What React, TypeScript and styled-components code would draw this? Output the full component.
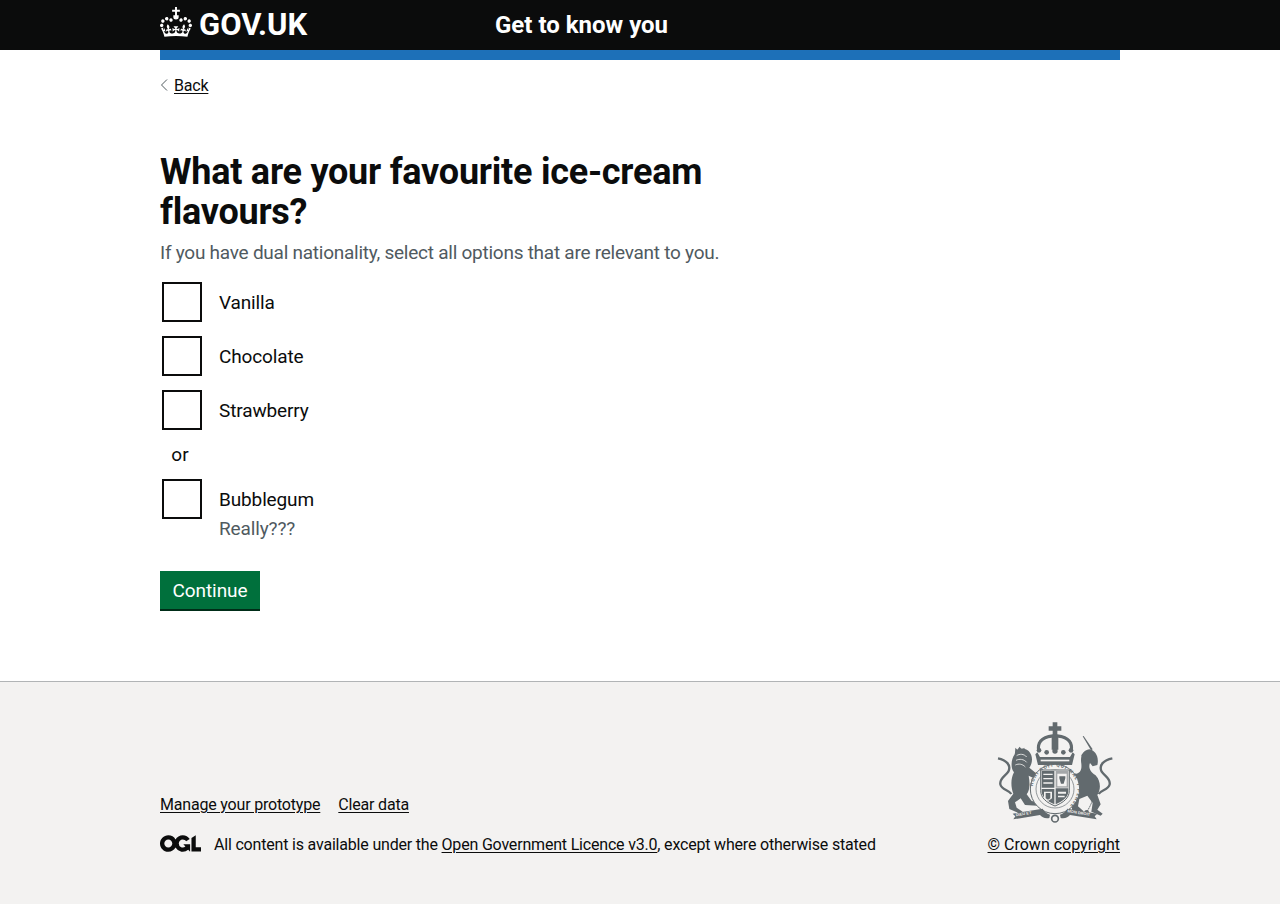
import React from "react";
import styled, { createGlobalStyle } from "styled-components";

const Global = createGlobalStyle`
  html, body { margin: 0; padding: 0; background: #fff; }
  body { font-family: Roboto, "Noto Sans", Arial, sans-serif; color: #0b0c0c; }
`;
const Page = styled.div`display:flex;flex-direction:column;min-height:904px;`;
const Header = styled.header`height:50px;background:#0b0c0c;flex:none;`;
const HeaderInner = styled.div`width:960px;margin:0 auto;height:50px;display:flex;align-items:center;`;
const Brand = styled.a`width:335px;display:flex;align-items:center;gap:7px;color:#fff;font-weight:700;font-size:31px;line-height:50px;`;
const CrownMark = styled.svg`flex:none;margin-bottom:6px;`;
const Service = styled.div`color:#fff;font-weight:700;font-size:24px;line-height:50px;`;
const Bar = styled.div`width:960px;height:10px;margin:0 auto;background:#1d70b8;flex:none;`;
const Main = styled.main`width:960px;margin:0 auto;flex:1;display:flex;flex-direction:column;`;
const Back = styled.div`margin-top:15px;height:21px;display:flex;align-items:center;gap:6px;font-size:16px;line-height:21px;letter-spacing:-.2px;`;
const BackChevron = styled.svg`flex:none;margin-bottom:2px;`;
const Link = styled.a`color:#0b0c0c;text-decoration:underline;text-underline-offset:2px;text-decoration-thickness:1px;`;
const Title = styled.h1`margin:56px 0 0;width:640px;font-size:36px;line-height:40px;font-weight:700;letter-spacing:-.24px;`;
const Hint = styled.div`margin-top:8px;font-size:19px;line-height:25px;color:#505a5f;letter-spacing:-.25px;`;
const Options = styled.div`margin-top:17px;display:flex;flex-direction:column;`;
const Option = styled.label`display:flex;padding-left:2px;min-height:54px;font-size:19px;line-height:25px;letter-spacing:-.13px;`;
const Box = styled.span`box-sizing:border-box;width:40px;height:40px;border:2px solid #0b0c0c;flex:none;background:#fff;`;
const Copy = styled.span`margin-left:17px;padding-top:8px;display:flex;flex-direction:column;`;
const OptionHint = styled.span`margin-top:4px;color:#505a5f;`;
const Divider = styled.div`width:40px;font-size:19px;line-height:21px;text-align:center;height:35px;`;
const Button = styled.button`align-self:flex-start;margin-top:30px;width:100px;height:38px;border:0;border-radius:0;padding:0;background:#00703c;color:#fff;font:400 19px/25px Roboto,sans-serif;letter-spacing:-.07px;box-shadow:0 2px 0 #002d18;`;
const Footer = styled.footer`flex:none;height:223px;box-sizing:border-box;border-top:1px solid #b1b4b6;background:#f3f2f1;`;
const FooterInner = styled.div`width:960px;margin:0 auto;padding-top:40px;display:flex;justify-content:space-between;align-items:flex-end;`;
const FooterLeft = styled.div`display:flex;flex-direction:column;gap:20px;font-size:16px;line-height:20px;letter-spacing:-.19px;`;
const FooterLinks = styled.div`display:flex;gap:18px;`;
const Licence = styled.div`display:flex;align-items:flex-start;gap:13px;`;
const FooterRight = styled.div`display:flex;flex-direction:column;align-items:flex-end;font-size:16px;line-height:20px;gap:11px;`;
const CrestMark = styled.svg`display:block;margin-right:6px;`;

const Crown = () => (
  <CrownMark width="32" height="30" viewBox="0 0 132 120" preserveAspectRatio="none" aria-hidden>
    <g transform="translate(0 23)">
      <path fill="#fff" fillRule="evenodd" d="M25 30.2c3.5 1.5 7.7-.2 9.1-3.7 1.5-3.6-.2-7.8-3.9-9.2-3.6-1.4-7.6.3-9.1 3.9-1.4 3.5.3 7.5 3.9 9zM9 39.5c3.6 1.5 7.8-.2 9.2-3.7 1.5-3.6-.2-7.8-3.9-9.1-3.6-1.5-7.6.2-9.1 3.8-1.4 3.5.3 7.5 3.8 9zM4.4 57.2c3.5 1.5 7.7-.2 9.1-3.8 1.5-3.6-.2-7.7-3.9-9.1-3.5-1.5-7.6.3-9.1 3.8-1.4 3.5.3 7.6 3.9 9.1zm38.3-21.4c3.5 1.5 7.7-.2 9.1-3.8 1.5-3.6-.2-7.7-3.9-9.1-3.6-1.5-7.6.3-9.1 3.8-1.3 3.6.4 7.7 3.9 9.1zm64.4-5.6c-3.6 1.5-7.8-.2-9.1-3.7-1.5-3.6.2-7.8 3.8-9.2 3.6-1.4 7.7.3 9.2 3.9 1.3 3.5-.4 7.5-3.9 9zm15.9 9.3c-3.6 1.5-7.7-.2-9.1-3.7-1.5-3.6.2-7.8 3.7-9.1 3.6-1.5 7.7.2 9.2 3.8 1.5 3.5-.3 7.5-3.8 9zm4.7 17.7c-3.6 1.5-7.8-.2-9.2-3.8-1.5-3.6.2-7.7 3.9-9.1 3.6-1.5 7.7.3 9.2 3.8 1.3 3.5-.4 7.6-3.9 9.1zM89.3 35.8c-3.6 1.5-7.8-.2-9.2-3.8-1.4-3.6.2-7.7 3.9-9.1 3.6-1.5 7.7.3 9.2 3.8 1.4 3.6-.3 7.7-3.9 9.1zM66 92.8c16.9 0 32.8 1.1 47.1 3.2 4-16.9 8.9-26.7 14-33.5l-9.6-3.4c1 4.9 1.1 7.2 0 10.2-1.5-1.4-3-4.3-4.2-8.7L108.6 76c2.8-2 5-3.2 7.5-3.3-4.4 9.4-10 11.9-13.6 11.2-4.3-.8-6.3-4.6-5.6-7.9 1-4.7 5.7-5.9 8-.5 4.3-8.7-3-11.4-7.6-8.8 7.1-7.2 7.9-13.5 2.1-21.1-8 6.1-8.1 12.3-4.5 20.8-4.7-5.4-12.1-2.5-9.5 6.2 3.4-5.2 7.9-2 7.2 3.1-.6 4.3-6.4 7.8-13.5 7.2-10.3-.9-10.9-8-11.2-13.8 2.5-.5 7.1 1.8 11 7.3L80.2 60c-4.1 4.4-8 5.3-12.3 5.4 1.4-4.4 8-11.6 8-11.6H55.5s6.4 7.2 7.9 11.6c-4.2-.1-8-1-12.3-5.4l1.4 16.4c3.9-5.5 8.5-7.7 10.9-7.3-.3 5.8-.9 12.8-11.1 13.8-7.2.6-12.9-2.9-13.5-7.2-.7-5 3.8-8.3 7.1-3.1 2.7-8.7-4.6-11.6-9.4-6.2 3.7-8.5 3.6-14.7-4.6-20.8-5.8 7.6-5 13.9 2.2 21.1-4.7-2.6-11.9.1-7.7 8.8 2.3-5.5 7.1-4.2 8.1.5.7 3.3-1.3 7.1-5.7 7.9-3.5.7-9-1.8-13.5-11.2 2.5.1 4.7 1.3 7.5 3.3l-4.7-15.4c-1.2 4.4-2.7 7.2-4.3 8.7-1.1-3-.9-5.3 0-10.2l-9.5 3.4c5 6.9 9.9 16.7 14 33.5 14.8-2.1 30.8-3.2 47.7-3.2z" />
    </g>
    <path fill="#fff" d="M62 0h8v11h12v8H70v14h7v8c0 6-5 9-11 9s-11-3-11-9v-8h7V19H50v-8h12z" />
  </CrownMark>
);

const Ogl = () => (
  <svg width="41" height="17" viewBox="0 0 483.2 195.7" aria-hidden>
    <path fill="#0b0c0c" d="M421.5 142.8V.1l-50.7 32.3v161.1h112.4v-50.7zm-122.3-9.6A47.12 47.12 0 0 1 221 97.8c0-26 21.1-47.1 47.1-47.1 16.7 0 31.4 8.7 39.7 21.8l42.7-27.2A97.63 97.63 0 0 0 268.1 0c-36.5 0-68.3 20.1-85.1 49.7A98 98 0 0 0 97.8 0C43.9 0 0 43.9 0 97.8s43.9 97.8 97.8 97.8c36.5 0 68.3-20.1 85.1-49.7a97.76 97.76 0 0 0 149.6 25.4l19.4 22.2h3v-87.8h-80l24.3 27.5zM97.8 145c-26 0-47.1-21.1-47.1-47.1s21.1-47.1 47.1-47.1 47.2 21 47.2 47S123.8 145 97.8 145" />
  </svg>
);

const G = "#626a6e";
const B = "#f3f2f1";
const Crest = () => (
  <CrestMark width="117" height="102" viewBox="51 21 351 306" aria-hidden>
    {/* crown */}
    <g fill={G}>
      <path d="M218 22h14v12h12v13h-12v14h-14V47h-12V34h12z" />
      <path d="M172 108c-6-24 8-46 46-50h14c38 4 52 26 46 50l-9-3c4-18-6-34-34-37v36h-20V68c-28 3-38 19-34 37z" />
      <path d="M172 112l8 14h90l8-14 6 6-8 32H174l-8-32z" />
      <circle cx="177" cy="106" r="7" /><circle cx="200" cy="112" r="7" /><circle cx="225" cy="108" r="8" /><circle cx="250" cy="112" r="7" /><circle cx="273" cy="106" r="7" />
    </g>
    <path fill={B} d="M182 134h86v5h-86z" />
    {/* lion */}
    <g fill={G}>
      <path d="M106 98l6 6 7-9 7 9 7-6 2 16h-30z" />
      <path d="M104 118C106 100 132 94 146 108C160 122 158 145 148 158L172 178L166 192L146 182C150 205 150 225 140 238L155 258L172 262L172 272L135 270L122 250L105 262L110 278L128 290L120 296L88 282L84 258L100 236C92 215 92 190 102 172C92 160 92 135 104 118Z" />
    </g>
    <g fill="none" stroke={G} strokeWidth="7">
      <path d="M54 130C78 135 95 150 85 170C75 185 58 190 61 208C64 225 88 225 94 237" />
      <path d="M397 130C372 135 355 150 365 170C375 185 392 190 389 208C386 225 362 225 356 237" />
    </g>
    <g fill="none" stroke={B} strokeWidth="2.500">
      <path d="M110 122c8-6 22-6 30 4M108 136c10-5 24-4 32 6M106 150c10-5 22-3 30 6" />
    </g>
    {/* unicorn */}
    <g fill={G}>
      <path d="M308 64l3-1 27 40-5 3z" />
      <path d="M328 103C346 106 358 126 352 150L338 154L330 144C324 158 332 172 346 180C362 196 364 222 352 240L362 268L352 284L368 296L362 302L334 290L338 264L322 242L298 252L294 274L310 288L304 296L276 284L276 256L290 236C284 222 286 212 292 206L276 196L280 176C300 178 306 166 304 146C300 124 308 106 328 103Z" />
      <path d="M304 120l10-8 4 14-8 10z" />
    </g>
    <path fill="none" stroke={G} strokeWidth="3" strokeDasharray="5 2" d="M352 190C350 225 338 262 322 288" />
    <circle cx="320" cy="292" r="7" fill={G} />
    {/* shield + garter */}
    <circle cx="225" cy="222" r="74" fill={B} />
    <circle cx="225" cy="222" r="74" fill="none" stroke={G} strokeWidth="3" />
    <circle cx="225" cy="222" r="57" fill="none" stroke={G} strokeWidth="2" />
    <defs>
      <path id="garter" d="M158 222a67 67 0 1 1 134 0a67 67 0 1 1-134 0" />
    </defs>
    <text fill={G} fontFamily="Roboto, sans-serif" fontSize="14" fontWeight="700" letterSpacing="3">
      <textPath href="#garter" startOffset="8">HONI SOIT QUI MAL Y PENSE</textPath>
    </text>
    <path fill={B} stroke={G} strokeWidth="3" d="M182 165h86v62c0 22-18 36-43 46-25-10-43-24-43-46z" />
    <g fill={G}>
      <path d="M185 168h38v50h-38zM227 220h38v8c0 18-16 30-38 40zM223 222v46c-22-10-38-22-38-40v-6z" />
      <path d="M227 168h38v50h-38z" opacity=".55" />
    </g>
    <g fill={B}>
      <path d="M190 176h28v4h-28zM190 189h28v4h-28zM190 202h28v4h-28zM232 176h28v38h-28z" />
      <path d="M192 230h24v20l-12 8-12-8z" />
      <path d="M234 230h24v6h-24zM234 242h20v5h-20z" />
    </g>
    <g fill={G}>
      <path d="M238 184h18v6l-5 16h-8l-5-16zM197 234h14v16l-7 4-7-4z" />
    </g>
    {/* motto */}
    <path fill={G} d="M98 296l90-15c4 8 12 14 22 18l-2 10c-14 2-22-2-28-9l-80 13 6-9zM352 296l-90-15c-4 8-12 14-22 18l2 10c14 2 22-2 28-9l80 13-6-9z" />
    <circle cx="225" cy="311" r="10" fill="none" stroke={G} strokeWidth="5" />
    <g fill={B} fontFamily="Liberation Sans, sans-serif" fontSize="12" fontWeight="700">
      <text x="108" y="304" transform="rotate(-9 108 304)">DIEU ET</text>
      <text x="262" y="292" transform="rotate(9 262 292)">MON DROIT</text>
    </g>
  </CrestMark>
);

const Chevron = () => (
  <BackChevron width="8" height="12" viewBox="0 0 8 12" aria-hidden>
    <path d="M7 .5L1.500 6 7 11.500" fill="none" stroke="#505a5f" strokeWidth="1" />
  </BackChevron>
);

const Choice = ({ label, hint }: { label: string; hint?: string }) => (
  <Option>
    <Box />
    <Copy>
      {label}
      {hint && <OptionHint>{hint}</OptionHint>}
    </Copy>
  </Option>
);

export default function App() {
  return (
    <Page>
      <Global />
      <Header>
        <HeaderInner>
          <Brand><Crown />GOV.UK</Brand>
          <Service>Get to know you</Service>
        </HeaderInner>
      </Header>
      <Bar />
      <Main>
        <Back><Chevron /><Link href="#">Back</Link></Back>
        <Title>What are your favourite ice-cream flavours?</Title>
        <Hint>If you have dual nationality, select all options that are relevant to you.</Hint>
        <Options>
          <Choice label="Vanilla" />
          <Choice label="Chocolate" />
          <Choice label="Strawberry" />
          <Divider>or</Divider>
          <Choice label="Bubblegum" hint="Really???" />
        </Options>
        <Button>Continue</Button>
      </Main>
      <Footer>
        <FooterInner>
          <FooterLeft>
            <FooterLinks><Link href="#">Manage your prototype</Link><Link href="#">Clear data</Link></FooterLinks>
            <Licence>
              <Ogl />
              <span>All content is available under the <Link href="#">Open Government Licence v3.0</Link>, except where otherwise stated</span>
            </Licence>
          </FooterLeft>
          <FooterRight>
            <Crest />
            <Link href="#">© Crown copyright</Link>
          </FooterRight>
        </FooterInner>
      </Footer>
    </Page>
  );
}
